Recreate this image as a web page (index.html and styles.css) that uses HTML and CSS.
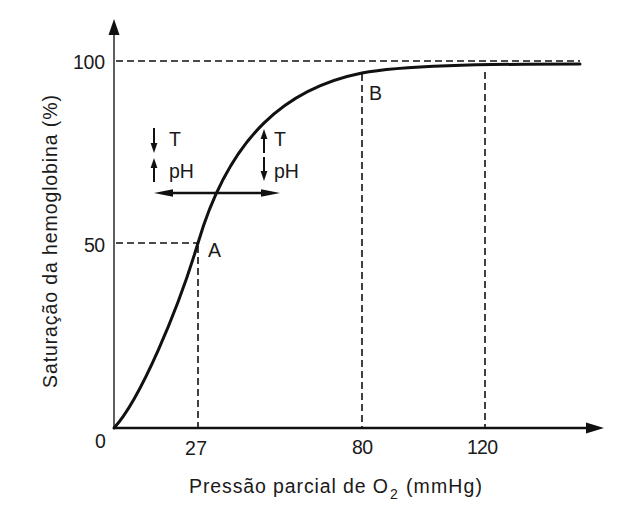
FILE: index.html
```html
<!DOCTYPE html>
<html lang="pt">
<head>
<meta charset="utf-8">
<title>Curva de dissociação da hemoglobina</title>
<link rel="stylesheet" href="styles.css">
</head>
<body>
<div class="chart">
<svg class="plot" width="628" height="510" viewBox="0 0 628 510" xmlns="http://www.w3.org/2000/svg">
  <!-- dashed guides -->
  <g class="dash">
    <line x1="116" y1="61" x2="580" y2="61"/>
    <line x1="116" y1="243" x2="198" y2="243"/>
    <line x1="198" y1="246" x2="198" y2="427"/>
    <line x1="362" y1="74" x2="362" y2="427"/>
    <line x1="485" y1="72" x2="485" y2="427"/>
  </g>
  <!-- axes -->
  <line class="axis-y" x1="114" y1="30" x2="114" y2="429"/>
  <polygon class="fill" points="114,19 108.5,35 119.5,35"/>
  <line class="axis-x" x1="113" y1="428" x2="592" y2="428"/>
  <polygon class="fill" points="604,428 586,422.5 586,433.5"/>
  <!-- curve -->
  <path class="curve" d="M114,428 C140,400 178,310 198,243 C230,135 287,88 362,73 C400,65.5 480,64 580,64"/>
  <!-- shift double arrow -->
  <line class="arrow" x1="165" y1="193" x2="268" y2="193"/>
  <polygon class="fill" points="154,193 173,189.2 173,196.8"/>
  <polygon class="fill" points="280,193 261,189.2 261,196.8"/>
  <!-- left small arrows -->
  <line class="small" x1="154" y1="128" x2="154" y2="145"/>
  <polygon class="fill" points="154,153 150.6,143 157.4,143"/>
  <line class="small" x1="154" y1="166" x2="154" y2="182"/>
  <polygon class="fill" points="154,158 150.6,168 157.4,168"/>
  <!-- right small arrows -->
  <line class="small" x1="264" y1="137" x2="264" y2="153"/>
  <polygon class="fill" points="264,129 260.6,139 267.4,139"/>
  <line class="small" x1="264" y1="157" x2="264" y2="173"/>
  <polygon class="fill" points="264,181 260.6,171 267.4,171"/>
  <!-- labels -->
  <text class="lbl" x="169" y="146">T</text>
  <text class="lbl" x="169" y="178">pH</text>
  <text class="lbl" x="274" y="146">T</text>
  <text class="lbl" x="274" y="178">pH</text>
  <text class="lbl" x="208" y="257">A</text>
  <text class="lbl" x="369" y="100">B</text>
  <text class="lbl" x="73" y="69" textLength="32">100</text>
  <text class="lbl" x="84" y="252" textLength="21">50</text>
  <text class="lbl" x="95" y="448">0</text>
  <text class="lbl" x="185" y="455" textLength="22">27</text>
  <text class="lbl" x="352" y="454" textLength="21">80</text>
  <text class="lbl" x="467" y="454" textLength="31">120</text>
  <text class="lbl" x="189" y="493" textLength="199">Pressão parcial de O</text>
  <text class="sub" x="390" y="499">2</text>
  <text class="lbl" x="406" y="493" textLength="76">(mmHg)</text>
  <text class="lbl" transform="translate(57,388) rotate(-90)" x="0" y="0" textLength="293">Saturação da hemoglobina (%)</text>
</svg>
</div>
</body>
</html>
```
FILE: styles.css
```css
html, body {
  margin: 0;
  padding: 0;
  background: #ffffff;
}
.chart {
  width: 628px;
  height: 510px;
  overflow: hidden;
}
.plot {
  display: block;
}
.dash line {
  stroke: #111111;
  stroke-width: 1.6;
  stroke-dasharray: 7 4;
  fill: none;
}
.axis-y {
  stroke: #444444;
  stroke-width: 1.7;
}
.axis-x {
  stroke: #111111;
  stroke-width: 2.6;
}
.fill {
  fill: #111111;
}
.curve {
  fill: none;
  stroke: #111111;
  stroke-width: 3;
  stroke-linecap: round;
}
.arrow {
  stroke: #111111;
  stroke-width: 2.6;
}
.small {
  stroke: #111111;
  stroke-width: 2;
}
.lbl {
  font-family: "Liberation Sans", Arial, sans-serif;
  font-size: 19.5px;
  fill: #1a1a1a;
}
.sub {
  font-family: "Liberation Sans", Arial, sans-serif;
  font-size: 14px;
  fill: #1a1a1a;
}
```
